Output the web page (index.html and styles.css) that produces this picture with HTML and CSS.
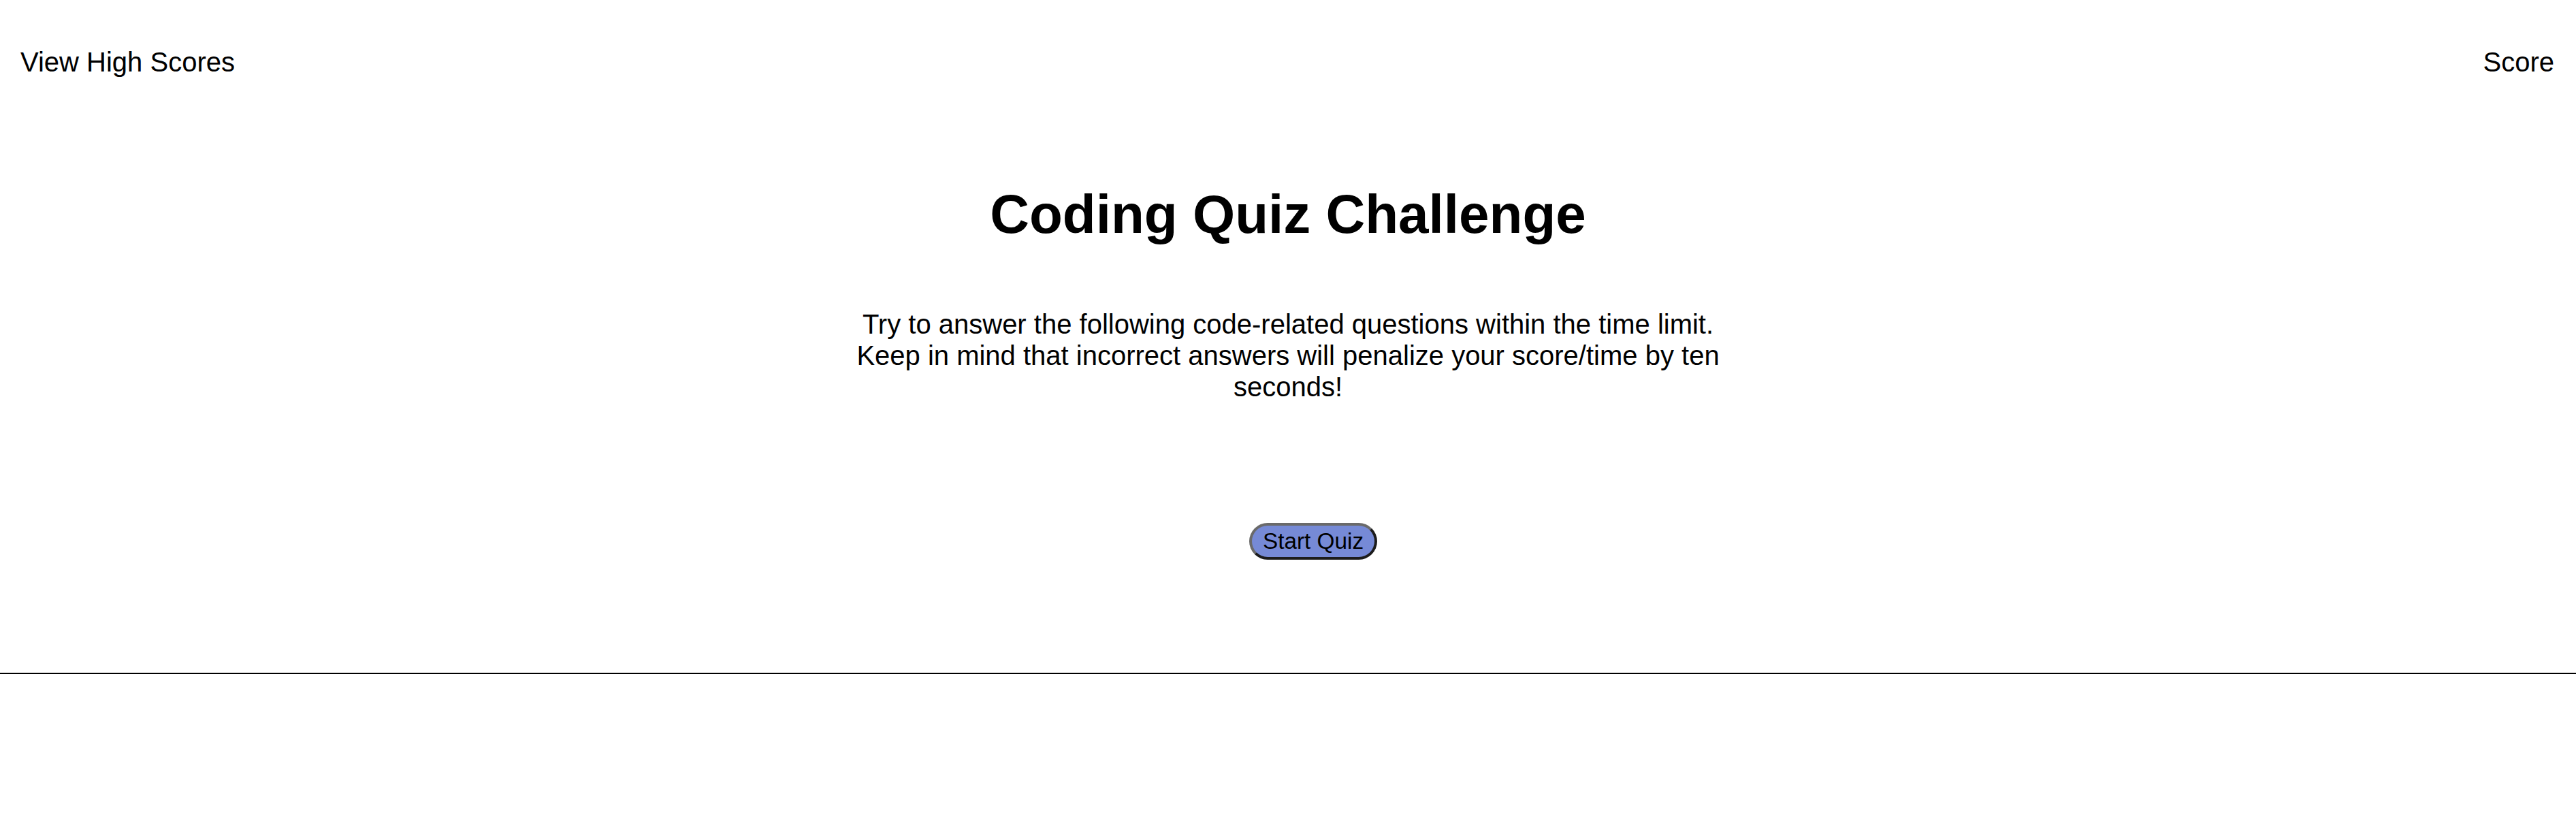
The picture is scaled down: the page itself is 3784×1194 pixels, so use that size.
FILE: index.html
```html
<!DOCTYPE html>
<html lang="en">
<head>
<meta charset="utf-8">
<title>Coding Quiz Challenge</title>
<link rel="stylesheet" href="styles.css">
</head>
<body>
<header class="top-bar">
  <a class="high-scores">View High Scores</a>
  <span class="score">Score</span>
</header>
<main class="intro">
  <h1 class="title">Coding Quiz Challenge</h1>
  <p class="lead">Try to answer the following code-related questions within the time limit. Keep in mind that incorrect answers will penalize your score/time by ten seconds!</p>
  <button class="start-btn" type="button">Start Quiz</button>
</main>
<hr class="divider">
</body>
</html>
```

FILE: styles.css
```css
html, body {
  margin: 0;
  padding: 0;
  background: #ffffff;
}

body {
  font-family: "Liberation Sans", Arial, Helvetica, sans-serif;
  font-size: 40px;
  line-height: 46px;
  color: #000000;
}

.top-bar {
  display: flex;
  justify-content: space-between;
  align-items: flex-start;
  padding: 68px 32px 0 30px;
}

.high-scores,
.score {
  color: #000000;
  text-decoration: none;
}

.intro {
  display: flex;
  flex-direction: column;
  align-items: center;
}

.title {
  margin: 155px 0 0;
  font-size: 80px;
  line-height: 92px;
  font-weight: 700;
  text-align: center;
}

.lead {
  width: 1320px;
  margin: 92px 0 0;
  text-align: center;
}

.start-btn {
  margin: 177px 0 0 74px;
  font-family: "Liberation Sans", Arial, Helvetica, sans-serif;
  font-size: 33.33px;
  line-height: 38px;
  color: #000000;
  background: #768ad6;
  padding: 4px 16px;
  border: 4px solid;
  border-color: #6a6a6a #1c1c1c #1c1c1c #6a6a6a;
  border-radius: 40px;
}

.divider {
  margin: 166px 0 0;
  border: 0;
  height: 2px;
  background: #000000;
}
```
